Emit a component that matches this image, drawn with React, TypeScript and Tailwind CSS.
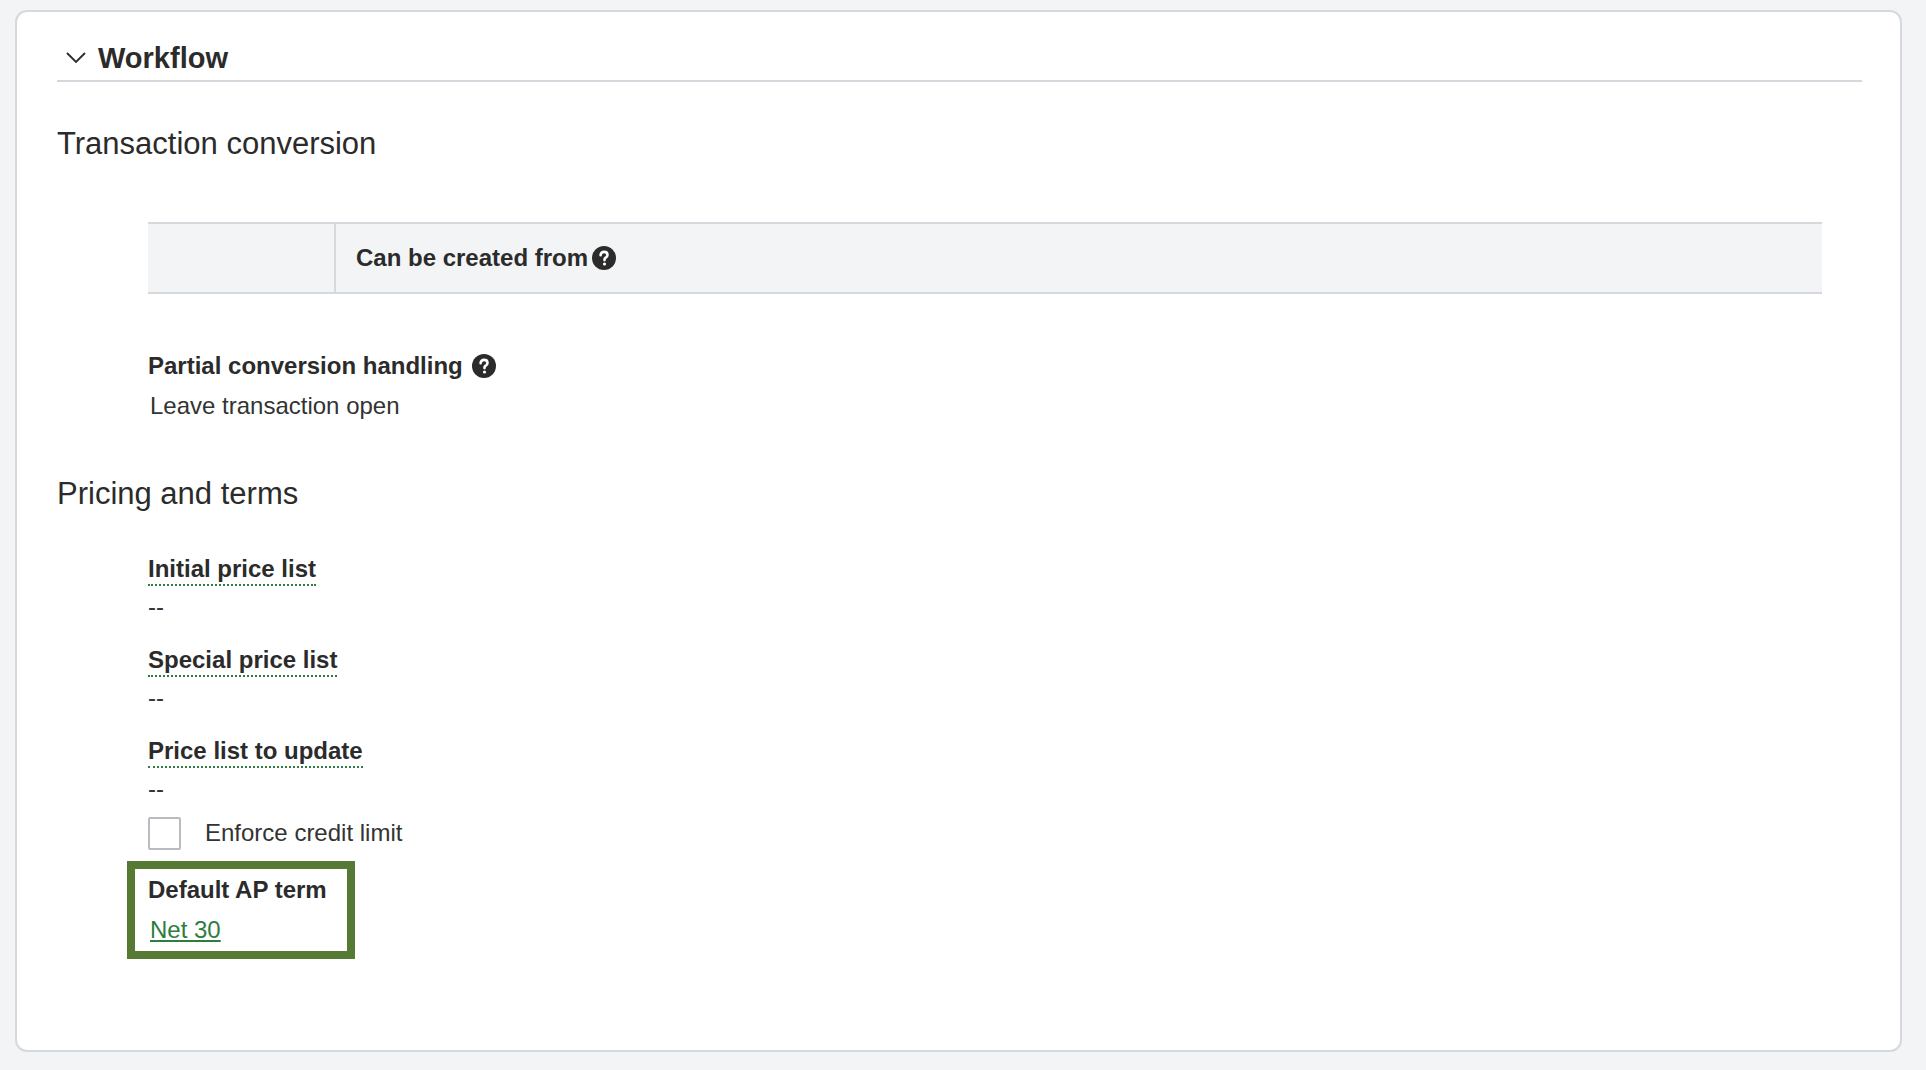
import type { ReactNode } from "react";

function HelpIcon({ className = "" }: { className?: string }) {
  return (
    <svg viewBox="0 0 24 24" className={className} aria-hidden>
      <circle cx="12" cy="12" r="12" fill="#2b2b2b" />
      <path
        d="M8.6 9.2c0-2 1.5-3.3 3.5-3.3s3.4 1.2 3.4 3c0 1.4-.8 2.1-1.8 2.8-.9.6-1.2 1-1.2 1.9v.5"
        fill="none"
        stroke="#fff"
        strokeWidth="2.6"
        strokeLinecap="round"
      />
      <circle cx="12.5" cy="18" r="1.6" fill="#fff" />
    </svg>
  );
}

function DottedField({ label, value }: { label: string; value: string }) {
  return (
    <div className="flex flex-col items-start">
      <span className="border-b-2 border-dotted border-[#2e7d3e] text-[24px] font-bold leading-[30px] text-[#2b2b2b]">
        {label}
      </span>
      <span className="mt-[5px] text-[24px] leading-[32px] text-[#333]">{value}</span>
    </div>
  );
}

function Section({ title, children }: { title: string; children: ReactNode }) {
  return (
    <div>
      <h3 className="text-[31px] leading-[40px] text-[#2b2b2b]">{title}</h3>
      {children}
    </div>
  );
}

export default function App() {
  return (
    <div
      className="min-h-[1070px] bg-[#f3f4f6] pl-[15px] pr-[24px] pt-[10px]"
      style={{ fontFamily: '"Liberation Sans", Arial, sans-serif' }}
    >
      <div className="h-[1042px] rounded-[12px] border-2 border-[#d5d9de] bg-white pl-[40px] pr-[38px] pt-[28px]">
        <div className="flex items-center gap-[12px] border-b-2 border-[#d5d9de] pb-[4px]">
          <svg viewBox="0 0 20 12" className="ml-[9px] h-[12px] w-[20px]" aria-hidden>
            <path d="M1 1l9 9 9-9" fill="none" stroke="#2b2b2b" strokeWidth="1.8" />
          </svg>
          <span className="text-[29px] font-bold leading-[36px] text-[#2b2b2b]">Workflow</span>
        </div>

        <div className="mt-[42px]">
          <Section title="Transaction conversion">
            <div className="ml-[91px] mr-[40px] mt-[58px] flex h-[72px] border-y-2 border-[#d5d9de] bg-[#f3f4f6]">
              <div className="w-[188px] border-r-2 border-[#d5d9de]" />
              <div className="flex items-center gap-[4px] pl-[20px] text-[24px] font-bold text-[#2b2b2b]">
                Can be created from
                <HelpIcon className="h-[24px] w-[24px]" />
              </div>
            </div>
            <div className="ml-[91px] mt-[57px]">
              <div className="flex items-center gap-[9px] text-[24px] font-bold leading-[30px] text-[#2b2b2b]">
                Partial conversion handling
                <HelpIcon className="h-[24px] w-[24px]" />
              </div>
              <div className="mt-[10px] pl-[2px] text-[24px] leading-[30px] text-[#333]">
                Leave transaction open
              </div>
            </div>
          </Section>
        </div>

        <div className="mt-[53px]">
          <Section title="Pricing and terms">
            <div className="ml-[91px] mt-[40px] flex flex-col gap-[22px]">
              <DottedField label="Initial price list" value="--" />
              <DottedField label="Special price list" value="--" />
              <DottedField label="Price list to update" value="--" />
            </div>
            <div className="ml-[91px] mt-[10px] flex items-center gap-[24px]">
              <div className="h-[33px] w-[33px] rounded-[2px] border-2 border-[#b8bcc0] bg-white" />
              <span className="text-[24px] text-[#333]">Enforce credit limit</span>
            </div>
            <div className="ml-[70px] mt-[10px] inline-block border-[8px] border-[#567a34] py-[6px] pl-[13px] pr-[20px]">
              <div className="text-[24px] font-bold leading-[30px] text-[#2b2b2b]">Default AP term</div>
              <a className="mt-[10px] inline-block pl-[2px] text-[24px] leading-[30px] text-[#2e7d3e] underline">
                Net 30
              </a>
            </div>
          </Section>
        </div>
      </div>
    </div>
  );
}
